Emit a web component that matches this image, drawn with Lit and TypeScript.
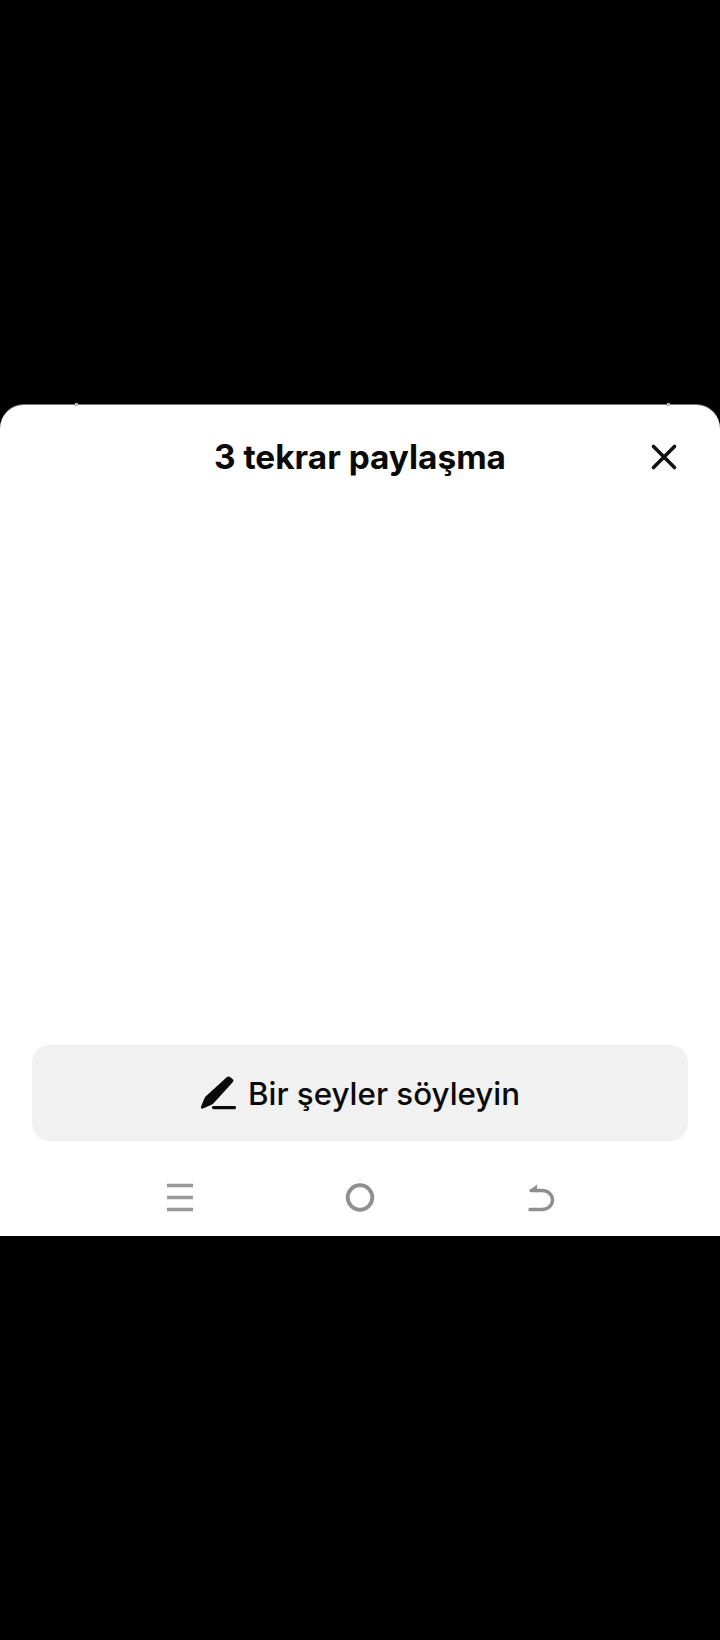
import { LitElement, html, css } from "lit";
import { customElement } from "lit/decorators.js";

@customElement("app-root")
export class AppRoot extends LitElement {
  static styles = css`
    :host {
      display: block;
      width: 720px;
      height: 1640px;
      background: #000;
      padding-top: 405px;
      box-sizing: border-box;
      font-family: "Liberation Sans", Arial, sans-serif;
      color: #111;
    }
    .sheet {
      position: relative;
      height: 831px;
      background: #fff;
      border-radius: 24px 24px 0 0;
      box-shadow: 0 -1px 0 #777;
      display: flex;
      flex-direction: column;
    }
    .nub {
      position: absolute;
      top: -2px;
      width: 3px;
      height: 3px;
      background: #bbb;
    }
    .nub.l { left: 75px; }
    .nub.r { left: 667px; }
    .header {
      position: relative;
      height: 104px;
      display: flex;
      align-items: center;
      justify-content: center;
    }
    .title {
      font-family: Inter, "Liberation Sans", sans-serif;
      font-size: 33.4px;
      font-weight: 700;
      line-height: 40px;
      color: #0a0a0a;
    }
    .close {
      position: absolute;
      left: 648px;
      top: 36px;
      width: 32px;
      height: 32px;
      display: block;
    }
    .body { flex: 1; }
    .composer {
      margin: 0 32px;
      height: 96px;
      background: #f1f1f2;
      border-radius: 18px;
      display: flex;
      align-items: center;
      justify-content: center;
      gap: 12px;
    }
    .composer svg { width: 36px; height: 36px; display: block; }
    .composer span {
      font-family: Inter, "Liberation Sans", sans-serif;
      font-size: 31.3px;
      font-weight: 500;
      line-height: 40px;
      padding-top: 2px;
      color: #0a0a0a;
    }
    .nav {
      height: 95px;
      padding-top: 19px;
      box-sizing: border-box;
      display: grid;
      grid-template-columns: repeat(3, 180px);
      justify-content: center;
      align-items: center;
    }
    .nav svg { width: 32px; height: 32px; display: block; margin: 0 auto; }
  `;

  render() {
    return html`
      <div class="sheet">
        <i class="nub l"></i><i class="nub r"></i>
        <div class="header">
          <div class="title">3 tekrar paylaşma</div>
          <svg class="close" viewBox="0 0 32 32" fill="none" stroke="#111" stroke-width="3.6" stroke-linecap="round">
            <path d="M5.5 5.5 26.5 26.5M26.5 5.5 5.5 26.5" />
          </svg>
        </div>
        <div class="body"></div>
        <div class="composer">
          <svg viewBox="0 0 36 36" fill="#0a0a0a">
            <path d="M27 2c.9-.8 2-.8 2.9-.1l2.7 2.1c1 .8 1.1 2.1.3 3.1L13.6 28.2c-.4.5-1 .9-1.6 1.2L3 33.6c-1.4.6-2.6-.6-2-2L4.6 23c.3-.6.6-1.1 1-1.6Z" />
            <rect x="12" y="31" width="24" height="3.2" rx="1.4" />
          </svg>
          <span>Bir şeyler söyleyin</span>
        </div>
        <div class="nav">
          <svg viewBox="0 0 32 32" fill="none" stroke="#999" stroke-width="3.6">
            <path d="M3 3.5H29M3 15.5H29M3 27.5H29" />
          </svg>
          <svg viewBox="0 0 32 32" fill="none" stroke="#8f8f8f" stroke-width="3.8">
            <circle cx="16" cy="15.5" r="12.3" />
          </svg>
          <svg viewBox="0 0 32 32" fill="none" stroke="#8f8f8f" stroke-width="3.4" stroke-linecap="round">
            <path d="M6 27.5H18C24 27.5 28.5 23.5 28.5 18 28.5 12.5 24 8.5 18 8.5H7" />
            <path d="M13 2.5 5.5 8.5 13 10.5Z" fill="#8f8f8f" stroke="none" />
          </svg>
        </div>
      </div>
    `;
  }
}
